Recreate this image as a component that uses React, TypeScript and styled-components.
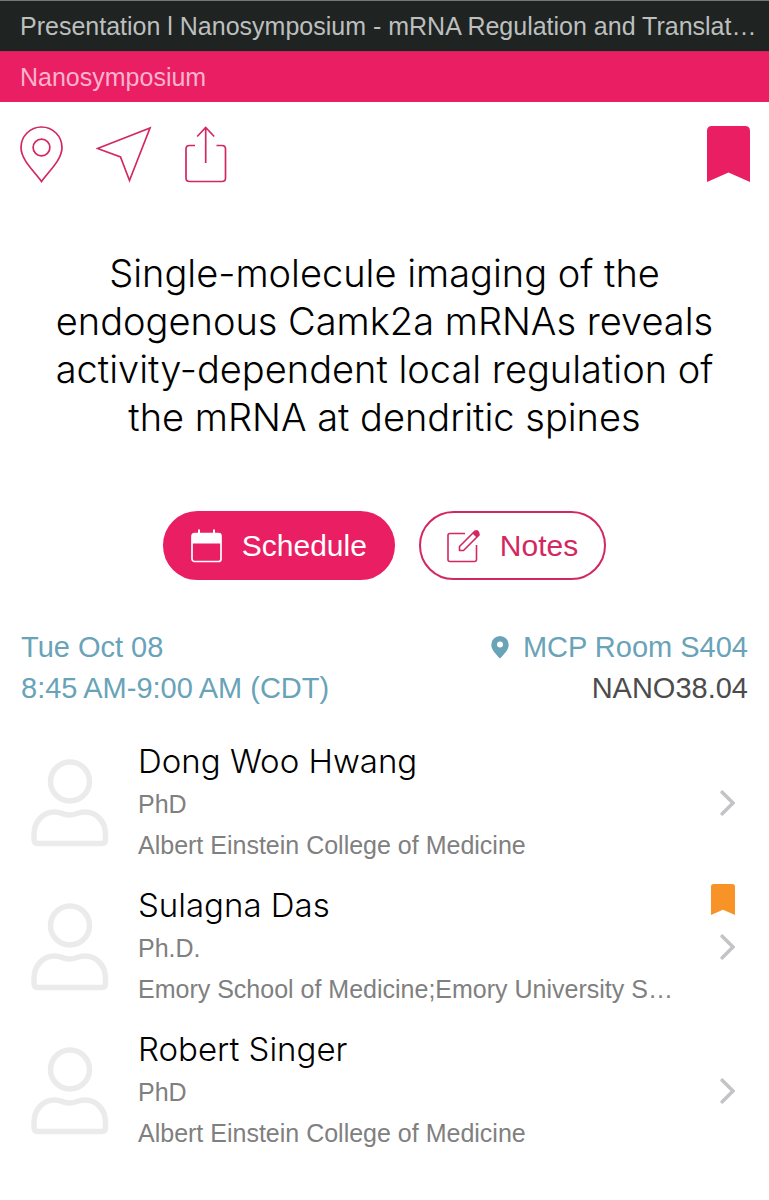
import React from "react";
import styled, { createGlobalStyle } from "styled-components";

const pink = "#ea1e63";
const linePink = "#d3285f";
const blue = "#69a3b8";

const GlobalStyle = createGlobalStyle`
  * { box-sizing: border-box; }
  body {
    margin: 0;
    background: #fff;
    font-family: "Liberation Sans", Arial, sans-serif;
  }
  svg { display: block; flex: none; }
`;

const Page = styled.div`
  width: 100%;
`;

const Bar = styled.div<{ $tone: "dark" | "pink" }>`
  padding: 0 12px 0 20px;
  font-size: 25px;
  line-height: 50px;
  white-space: nowrap;
  overflow: hidden;
  text-overflow: ellipsis;
  background: ${(p) => (p.$tone === "dark" ? "#1f2422" : pink)};
  color: ${(p) => (p.$tone === "dark" ? "#bcbfbe" : "#fab4cd")};
  border-top: 1px solid ${(p) => (p.$tone === "dark" ? "#747978" : "#c4285a")};
`;

const Toolbar = styled.nav`
  display: flex;
  align-items: flex-start;
  gap: 32px;
  padding: 24px 19px 0;
`;

const IconButton = styled.button<{ $end?: boolean }>`
  padding: 0;
  border: 0;
  background: none;
  cursor: pointer;
  margin-left: ${(p) => (p.$end ? "auto" : "0")};
`;

const Title = styled.h1`
  margin: 66px 40px 0;
  text-align: center;
  font-family: Inter, "Liberation Sans", sans-serif;
  font-size: 38px;
  line-height: 48px;
  font-weight: 300;
  color: #000;
`;

const Actions = styled.div`
  display: flex;
  justify-content: center;
  gap: 24px;
  margin-top: 70px;
`;

const Pill = styled.button<{ $filled?: boolean }>`
  display: flex;
  align-items: center;
  gap: 20px;
  height: 69px;
  padding: 0 26px;
  border: 2px solid ${(p) => (p.$filled ? pink : linePink)};
  border-radius: 35px;
  background: ${(p) => (p.$filled ? pink : "#fff")};
  color: ${(p) => (p.$filled ? "#fff" : linePink)};
  font-family: inherit;
  font-size: 30px;
  cursor: pointer;
`;

const Details = styled.div`
  display: flex;
  justify-content: space-between;
  margin-top: 47px;
  padding: 0 21px;
  font-size: 29px;
  line-height: 41px;
  color: ${blue};
`;

const DetailColumn = styled.div<{ $end?: boolean }>`
  display: flex;
  flex-direction: column;
  align-items: ${(p) => (p.$end ? "flex-end" : "flex-start")};
`;

const RoomLink = styled.a`
  display: flex;
  align-items: center;
  gap: 14px;
  color: inherit;
  text-decoration: none;
`;

const Code = styled.span`
  color: #4c4c4c;
`;

const People = styled.ul`
  list-style: none;
  margin: 30px 0 0;
  padding: 0;
`;

const PersonLink = styled.a`
  position: relative;
  display: flex;
  align-items: center;
  padding: 0 34px 17px 31px;
  color: inherit;
  text-decoration: none;
`;

const PersonText = styled.div`
  flex: 1;
  min-width: 0;
  margin: 0 40px 0 29px;
`;

const Name = styled.h2`
  margin: 0;
  font-family: Inter, "Liberation Sans", sans-serif;
  font-size: 33px;
  line-height: 45px;
  font-weight: 300;
  color: #000;
`;

const Meta = styled.p`
  margin: 0;
  font-size: 25px;
  line-height: 41px;
  color: #808080;
  white-space: nowrap;
  overflow: hidden;
  text-overflow: ellipsis;
`;

const Flag = styled.span`
  position: absolute;
  top: 1px;
  right: 34px;
`;

const Bookmark = ({ color, width, height }: { color: string; width: number; height: number }) => (
  <svg width={width} height={height} viewBox="0 0 43 56" preserveAspectRatio="none" fill={color}>
    <path d="M5 0H38Q43 0 43 5V56L21.500 46.500L0 56V5Q0 0 5 0Z" />
  </svg>
);

const PinOutline = () => (
  <svg width="45" height="57" viewBox="0 0 45 57" fill="none" stroke={linePink} strokeWidth="1.700">
    <path d="M22.500 55.500C16 46 2 34 2 21.500A20.500 20.500 0 0 1 43 21.500C43 34 29 46 22.500 55.500Z" />
    <circle cx="22.500" cy="21.500" r="8.400" />
  </svg>
);

const ArrowOutline = () => (
  <svg width="56" height="57" viewBox="0 0 56 57" fill="none" stroke={linePink} strokeWidth="1.700">
    <path d="M1.500 22.500L54 2L33.500 54.500L24.500 31Z" />
  </svg>
);

const Share = () => (
  <svg width="43" height="57" viewBox="0 0 43 57" fill="none" stroke={linePink} strokeWidth="1.700">
    <path d="M11 19.500H5.500Q2 19.500 2 23V52Q2 55.500 5.500 55.500H38Q41.500 55.500 41.500 52V23Q41.500 19.500 38 19.500H32.500" />
    <path d="M21.700 37V1.500M13.200 10.500L21.700 1.500L30.200 10.500" />
  </svg>
);

const Calendar = () => (
  <svg width="31" height="34" viewBox="0 0 31 34" fill="none">
    <rect x="1" y="4.500" width="29" height="28" rx="2.500" stroke="#fff" strokeWidth="1.700" />
    <path d="M1 14.500V6.500Q1 4 3.500 4H27.500Q30 4 30 6.500V14.500Z" fill="#fff" />
    <path d="M8 0.500V5M23 0.500V5" stroke="#fff" strokeWidth="2" />
  </svg>
);

const Compose = () => (
  <svg width="33" height="34" viewBox="0 0 33 34" fill="none" stroke={linePink} strokeWidth="1.600">
    <path d="M18 4.500H3Q1 4.500 1 6.500V30.500Q1 32.500 3 32.500H27.500Q29.500 32.500 29.500 30.500V16" />
    <path d="M12.500 21.500V17.500L28 2L32 6L16.500 21.500Z" strokeLinejoin="round" />
    <path d="M25.500 4.500L28.500 1.500Q30 0.500 31.500 2T32.500 5.500L29.500 8.500Z" fill={linePink} stroke="none" />
  </svg>
);

const PinSolid = () => (
  <svg width="18" height="23" viewBox="0 0 18 23">
    <path
      fill={blue}
      fillRule="evenodd"
      d="M9 0A8.700 8.700 0 0 1 17.700 8.700C17.700 14 13 18 9 22.500C5 18 0.300 14 0.300 8.700A8.700 8.700 0 0 1 9 0ZM9 5.500A3 3 0 1 0 9 11.500A3 3 0 1 0 9 5.500Z"
    />
  </svg>
);

const Avatar = () => (
  <svg width="78" height="88" viewBox="0 0 78 88" fill="none" stroke="#ebebeb" strokeWidth="5.500">
    <circle cx="39" cy="22.500" r="19.500" />
    <path d="M7 84.500Q3 84.500 3 80.500V76C3 62 12 53 24 53C30 53 33 56 38.700 56C44.500 56 47.500 53 53.500 53C65.500 53 74.500 62 74.500 76V80.500Q74.500 84.500 70.500 84.500Z" />
  </svg>
);

const Chevron = () => (
  <svg width="15" height="26" viewBox="0 0 15 26" fill="none" stroke="#c4c4c7" strokeWidth="3.600" strokeLinecap="round">
    <path d="M2.200 2.200L13 13L2.200 23.800" />
  </svg>
);

const people = [
  { name: "Dong Woo Hwang", degree: "PhD", place: "Albert Einstein College of Medicine", flagged: false },
  {
    name: "Sulagna Das",
    degree: "Ph.D.",
    place: "Emory School of Medicine;Emory University School of Medicine",
    flagged: true,
  },
  { name: "Robert Singer", degree: "PhD", place: "Albert Einstein College of Medicine", flagged: false },
];

export default function App() {
  return (
    <Page>
      <GlobalStyle />
      <header>
        <Bar $tone="dark">Presentation l Nanosymposium - mRNA Regulation and Translation</Bar>
        <Bar $tone="pink">Nanosymposium</Bar>
      </header>
      <Toolbar>
        <IconButton aria-label="Location"><PinOutline /></IconButton>
        <IconButton aria-label="Directions"><ArrowOutline /></IconButton>
        <IconButton aria-label="Share"><Share /></IconButton>
        <IconButton aria-label="Bookmark" $end><Bookmark color={pink} width={43} height={56} /></IconButton>
      </Toolbar>
      <main>
        <Title>
          Single-molecule imaging of the endogenous Camk2a mRNAs reveals activity-dependent local regulation of the
          mRNA at dendritic spines
        </Title>
        <Actions>
          <Pill $filled><Calendar />Schedule</Pill>
          <Pill><Compose />Notes</Pill>
        </Actions>
        <Details>
          <DetailColumn>
            <span>Tue Oct 08</span>
            <span>8:45{"\u202f"}AM-9:00{"\u202f"}AM (CDT)</span>
          </DetailColumn>
          <DetailColumn $end>
            <RoomLink href="#room"><PinSolid />MCP Room S404</RoomLink>
            <Code>NANO38.04</Code>
          </DetailColumn>
        </Details>
        <People>
          {people.map((p) => (
            <li key={p.name}>
              <PersonLink href="#person">
                <Avatar />
                <PersonText>
                  <Name>{p.name}</Name>
                  <Meta>{p.degree}</Meta>
                  <Meta>{p.place}</Meta>
                </PersonText>
                <Chevron />
                {p.flagged && <Flag><Bookmark color="#f79327" width={24} height={31} /></Flag>}
              </PersonLink>
            </li>
          ))}
        </People>
      </main>
    </Page>
  );
}
